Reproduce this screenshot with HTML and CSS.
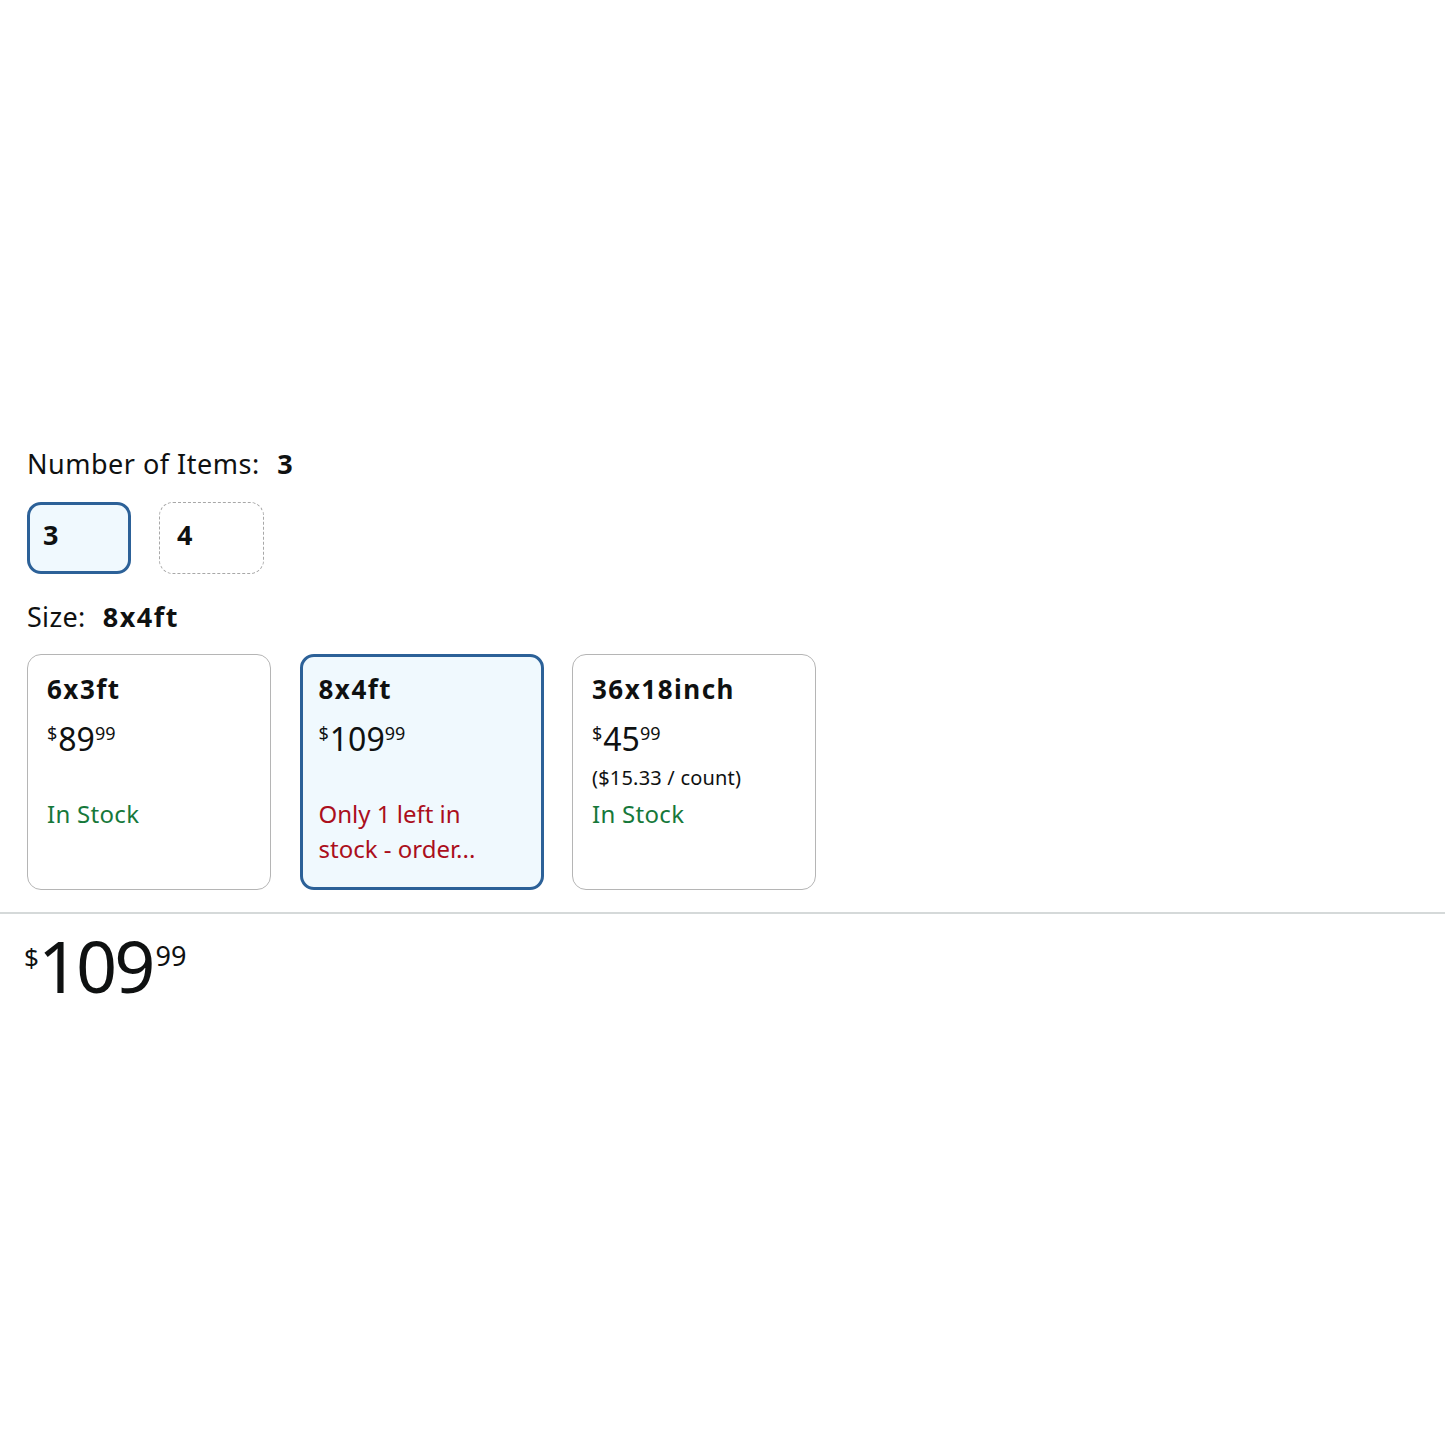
FILE: index.html
```html
<!DOCTYPE html>
<html lang="en">
  <head>
    <meta charset="UTF-8" />
    <meta name="viewport" content="width=device-width, initial-scale=1.0" />
    <title>Product options</title>
    <link rel="stylesheet" href="styles.css">
  </head>
  <body>
    <div class="variations">
      <div class="label first">Number of Items: <b>3</b></div>
      <div class="count-row">
        <div class="count-btn selected">3</div>
        <div class="count-btn dashed">4</div>
      </div>

      <div class="label">Size: <b>8x4ft</b></div>
      <div class="size-row">
        <div class="size-card">
          <div class="size-name">6x3ft</div>
          <div class="price"><span class="sym">$</span>89<span class="frac">99</span></div>
          <div class="unit"></div>
          <div class="stock">In Stock</div>
        </div>
        <div class="size-card selected">
          <div class="size-name">8x4ft</div>
          <div class="price"><span class="sym">$</span>109<span class="frac">99</span></div>
          <div class="unit"></div>
          <div class="stock low">Only 1 left in stock - order...</div>
        </div>
        <div class="size-card">
          <div class="size-name">36x18inch</div>
          <div class="price"><span class="sym">$</span>45<span class="frac">99</span></div>
          <div class="unit">($15.33 / count)</div>
          <div class="stock">In Stock</div>
        </div>
      </div>
    </div>

    <div class="buybox">
      <div class="big-price"><span class="sym">$</span>109<span class="frac">99</span></div>
    </div>
  </body>
</html>
```

FILE: styles.css
```css
body {
  margin: 0;
  background-color: white;
  color: #0f1111;
  font-family: "Noto Sans", "Liberation Sans", sans-serif;
}
.variations {
  padding: 444px 27px 22px 27px;
}
.label {
  font-size: 27px;
  line-height: 38px;
  letter-spacing: 0.3px;
}
.label.first {
  line-height: 40px;
  letter-spacing: 0.5px;
}
.label b {
  margin-left: 10px;
  letter-spacing: 1.5px;
}
.count-row {
  display: flex;
  gap: 28px;
  margin: 18px 0 24px 0;
}
.count-btn {
  width: 104px;
  height: 72px;
  box-sizing: border-box;
  border-radius: 14px;
  padding-bottom: 7px;
  display: flex;
  align-items: center;
  font-size: 27px;
  font-weight: bold;
}
.count-btn.selected {
  border: solid 3px #2c6198;
  background-color: #f0f9fe;
  padding-left: 13px;
}
.count-btn.dashed {
  width: 105px;
  border: dashed 1px #a8a8a8;
  padding-left: 17px;
}
.size-row {
  display: flex;
  gap: 28.5px;
  margin-top: 18px;
}
.size-card {
  width: 244px;
  height: 236px;
  box-sizing: border-box;
  border: solid 1px #b5b5b5;
  border-radius: 14px;
  padding: 16px 19px;
}
.size-card.selected {
  border: solid 3px #2c6198;
  background-color: #f0f9fe;
  padding: 14px 16px;
}
.size-name {
  font-size: 26px;
  font-weight: bold;
  line-height: 36px;
  letter-spacing: 1.5px;
}
.price {
  font-size: 32px;
  line-height: 44px;
  margin-top: 10px;
}
.price .sym,
.price .frac {
  font-size: 18px;
  line-height: 1;
  vertical-align: 11px;
}
.price .sym {
  margin-right: 1px;
}
.unit {
  font-size: 20px;
  line-height: 28px;
  height: 28px;
  margin-top: 3px;
  letter-spacing: 0.2px;
}
.stock {
  font-size: 24px;
  line-height: 35px;
  margin-top: 4px;
  color: #16783a;
  letter-spacing: 0.3px;
  width: 190px;
}
.stock.low {
  color: #ab0f1c;
  letter-spacing: 0;
}
.buybox {
  border-top: solid 2px #d5d9d9;
  padding: 11px 24px;
}
.big-price {
  font-size: 72px;
  line-height: 80px;
  letter-spacing: -3px;
}
.big-price .sym {
  font-size: 26px;
  line-height: 1;
  vertical-align: 26px;
  letter-spacing: 0;
  margin-right: -1px;
}
.big-price .frac {
  font-size: 27px;
  line-height: 1;
  vertical-align: 27px;
  letter-spacing: 0;
  margin-left: 3px;
}
```
